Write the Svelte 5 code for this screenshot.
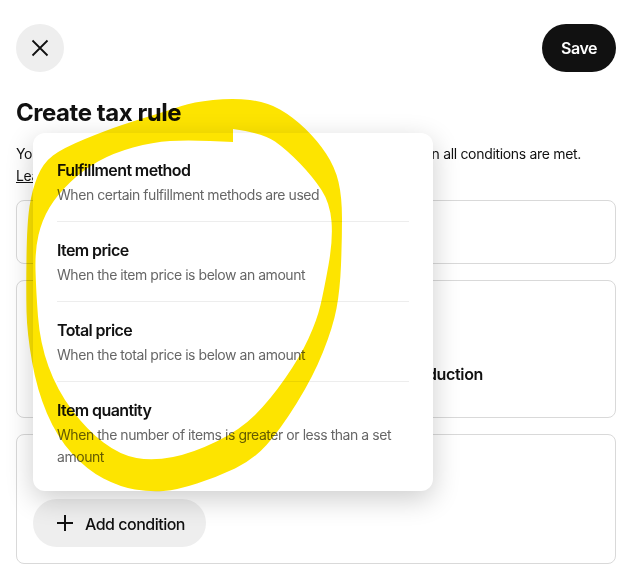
<script>
  const conditions = [
    { title: 'Fulfillment method', desc: 'When certain fulfillment methods are used' },
    { title: 'Item price', desc: 'When the item price is below an amount' },
    { title: 'Total price', desc: 'When the total price is below an amount' },
    { title: 'Item quantity', desc: 'When the number of items is greater or less than a set amount' }
  ];

  const outer = [
    [233,98],[267,102],[293,117],[317,140],[335,167],[342,197],[342,240],[340,290],[333,327],[313,377],[280,430],[253,460],[217,477],[177,490],[150,492],[120,487],[87,470],[57,437],[37,390],[27,333],[26,290],[27,223],[32,190],[43,163],[63,148],[107,130],[137,120],[170,110],[193,102]
  ];
  const inner = [
    [233,129],[263,133],[287,150],[313,177],[330,203],[333,240],[324,290],[317,320],[300,357],[270,400],[240,430],[193,453],[153,461],[120,455],[87,430],[57,390],[40,343],[36,290],[35,250],[42,220],[57,195],[83,170],[113,153],[153,142],[187,140],[233,142]
  ];

  const mid = (a, b) => `${(a[0] + b[0]) / 2} ${(a[1] + b[1]) / 2}`;

  function closedCurve(p) {
    let d = `M${mid(p[p.length - 1], p[0])}`;
    p.forEach((pt, i) => {
      d += ` Q${pt[0]} ${pt[1]} ${mid(pt, p[(i + 1) % p.length])}`;
    });
    return d + ' Z';
  }

  function openCurve(p) {
    let d = `M${p[0][0]} ${p[0][1]}`;
    for (let i = 1; i < p.length - 1; i++) {
      d += ` Q${p[i][0]} ${p[i][1]} ${mid(p[i], p[i + 1])}`;
    }
    const last = p[p.length - 1];
    return d + ` L${last[0]} ${last[1]} Z`;
  }

  const ringPath = `${closedCurve(outer)} ${openCurve(inner)}`;
</script>

<div class="page">
  <header class="top">
    <button class="close" aria-label="Close">
      <svg width="24" height="24" viewBox="0 0 24 24" fill="none" stroke="#111" stroke-width="1.8">
        <path d="M4.5 4.5 19.5 19.5M19.5 4.5 4.5 19.5" />
      </svg>
    </button>
    <button class="save">Save</button>
  </header>

  <h1>Create tax rule</h1>
  <p class="intro">You can create a new tax rule that applies a tax rate to orders when all conditions are met.<br /><a href="#learn">Learn more</a></p>

  <section class="card first"></section>
  <section class="card second"><span>Tax on production</span></section>
  <section class="card third">
    <button class="add">
      <svg width="24" height="24" viewBox="0 0 24 24" fill="none" stroke="#111" stroke-width="2">
        <path d="M12 4v16M4 12h16" />
      </svg>
      <span class="add-label">Add condition</span>
    </button>
  </section>

  <div class="menu">
    {#each conditions as c}
      <div class="item">
        <div class="title">{c.title}</div>
        <div class="desc">{c.desc}</div>
      </div>
    {/each}
  </div>

  <svg class="ink" width="642" height="583" viewBox="0 0 642 583">
    <path fill="#fde400" fill-rule="evenodd" d={ringPath} />
  </svg>
</div>

<style>
  :global(body) {
    margin: 0;
    background: #fff;
  }
  .page {
    position: relative;
    width: 642px;
    height: 583px;
    overflow: hidden;
    padding: 24px 26px 0 16px;
    box-sizing: border-box;
    font-family: Inter, "Liberation Sans", sans-serif;
    color: #111;
  }
  button {
    border: 0;
    font-family: inherit;
    padding: 0;
  }
  .top {
    display: flex;
    justify-content: space-between;
  }
  .close {
    width: 48px;
    height: 48px;
    border-radius: 50%;
    background: #eeeeee;
    display: flex;
    align-items: center;
    justify-content: center;
  }
  .save {
    width: 74px;
    height: 48px;
    border-radius: 24px;
    background: #111;
    color: #fff;
    font-size: 16px;
    font-weight: 600;
    letter-spacing: -0.45px;
  }
  h1 {
    margin: 24px 0 0;
    font-size: 24px;
    line-height: 34px;
    font-weight: 700;
    letter-spacing: -0.45px;
  }
  .intro {
    margin: 13px 0 0;
    font-size: 14px;
    line-height: 22px;
    letter-spacing: -0.32px;
    height: 44px;
    white-space: nowrap;
    color: #111;
  }
  .intro a {
    color: #111;
  }
  .card {
    border: 1px solid #d9d9d9;
    border-radius: 8px;
    box-sizing: border-box;
    margin-top: 16px;
  }
  .first {
    margin-top: 13px;
    height: 64px;
  }
  .second {
    height: 138px;
    display: flex;
    align-items: center;
    justify-content: flex-end;
    padding: 50px 132px 0 0;
    font-size: 16px;
    font-weight: 600;
    letter-spacing: -0.35px;
  }
  .third {
    height: 130px;
    display: flex;
    align-items: flex-end;
    padding: 0 0 16px 16px;
  }
  .add {
    width: 173px;
    height: 48px;
    border-radius: 24px;
    background: #eeeeee;
    color: #111;
    display: flex;
    align-items: center;
    gap: 8px;
    padding-left: 20px;
    font-size: 16px;
    font-weight: 500;
    letter-spacing: -0.5px;
    white-space: nowrap;
  }
  .add-label {
    padding-top: 2px;
  }
  .menu {
    position: absolute;
    left: 33px;
    top: 133px;
    width: 400px;
    height: 358px;
    box-sizing: border-box;
    padding: 9px 24px 0;
    background: #fff;
    border-radius: 12px;
    box-shadow: 0 8px 28px rgba(0, 0, 0, 0.2);
  }
  .item {
    padding: 16px 0 15px;
    border-bottom: 1px solid #ededed;
  }
  .item:last-child {
    border-bottom: 0;
  }
  .title {
    font-size: 16px;
    line-height: 24px;
    font-weight: 600;
    letter-spacing: -0.6px;
  }
  .desc {
    margin-top: 2px;
    font-size: 14px;
    line-height: 22px;
    letter-spacing: -0.45px;
    color: #666;
  }
  .ink {
    position: absolute;
    left: 0;
    top: 0;
    pointer-events: none;
    mix-blend-mode: multiply;
  }
</style>
